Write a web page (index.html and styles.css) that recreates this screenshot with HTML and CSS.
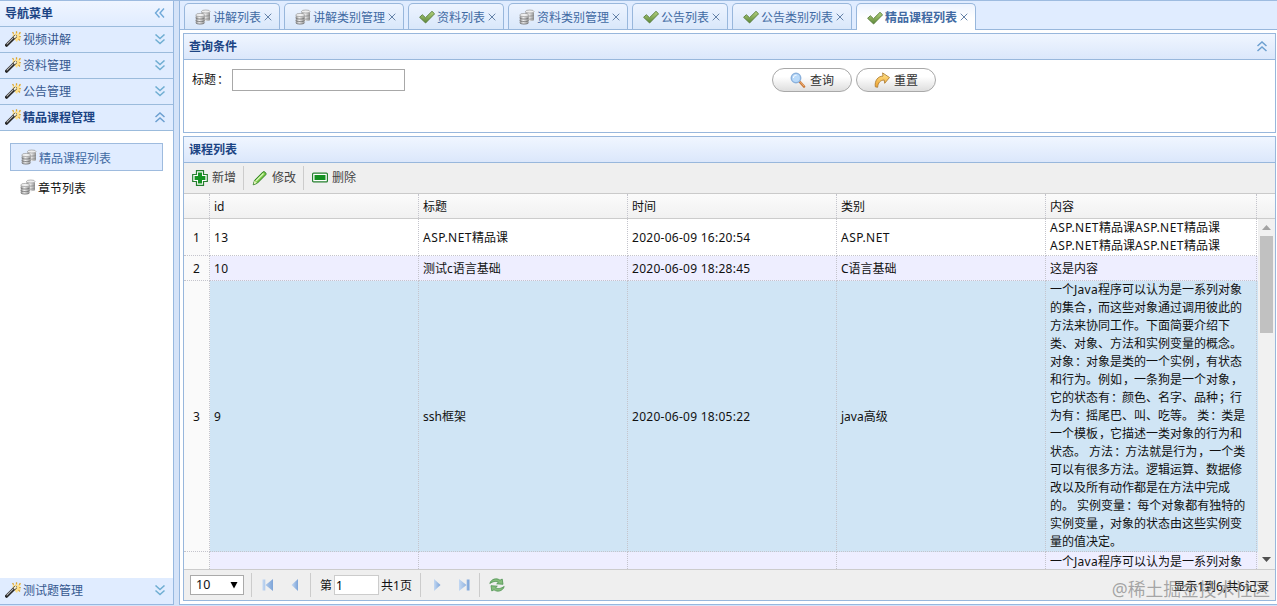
FILE: index.html
```
<!DOCTYPE html>
<html lang="zh-CN">
<head>
<meta charset="utf-8">
<title>精品课程列表</title>
<link rel="stylesheet" href="styles.css">
</head>
<body>
<svg class="defs" width="0" height="0">
  <defs>
    <linearGradient id="steel" x1="0" x2="1" y1="0" y2="0"><stop offset="0" stop-color="#8a8a8a"/><stop offset=".4" stop-color="#f2f2f2"/><stop offset="1" stop-color="#8f8f8f"/></linearGradient>
    <linearGradient id="leaf" x1="0" x2="0" y1="0" y2="1"><stop offset="0" stop-color="#b4d47e"/><stop offset="1" stop-color="#5c8638"/></linearGradient>
    <linearGradient id="sky" x1="0" x2="1" y1="0" y2="0"><stop offset="0" stop-color="#c3d8f2"/><stop offset="1" stop-color="#7da4d8"/></linearGradient>
    <linearGradient id="gold" x1="0" x2="0" y1="0" y2="1"><stop offset="0" stop-color="#ffe68d"/><stop offset="1" stop-color="#ee9f2b"/></linearGradient>
    <symbol id="db" viewBox="0 0 16 16">
      <path d="M6.500 2.500v8.500c0 1.500 8.500 1.500 8.500 0v-8.500z" fill="url(#steel)"/>
      <ellipse cx="10.750" cy="2.500" rx="4.250" ry="1.500" fill="#eee" stroke="#999" stroke-width=".7"/>
      <path d="M6.500 6c1 1.500 7.500 1.500 8.500 0M6.500 9c1 1.500 7.500 1.500 8.500 0" fill="none" stroke="#888" stroke-width=".8"/>
      <path d="M.800 6v7.500c0 2 8.700 2 8.700 0v-7.500z" fill="url(#steel)"/>
      <ellipse cx="5.150" cy="6" rx="4.350" ry="1.600" fill="#f0f0f0" stroke="#999" stroke-width=".7"/>
      <path d="M.800 8.700c0 1.800 8.700 1.800 8.700 0M.800 11.300c0 1.800 8.700 1.800 8.700 0M.800 13.700c0 1.800 8.700 1.800 8.700 0" fill="none" stroke="#777" stroke-width=".9"/>
    </symbol>
    <symbol id="ok" viewBox="0 0 16 16"><path d="M.600 8.300 3.300 5.700l3.200 3L13 2.300l2.600 2.500-9 9.200z" fill="url(#leaf)" stroke="#567a3a" stroke-width=".9"/></symbol>
    <symbol id="wand" viewBox="0 0 16 16">
      <path d="m8 1.500 1.500 2L12 1l.6 2.500L16 2l-1.800 3.500L16 8l-2.800.200L12 11l-2-2-2.500-3z" fill="#ffe08a"/>
      <path d="m7.500 1.200 1.200 1.500M11.500.300v2M15.500 1.300l-1.500 1.500M15.800 5.600h-1.700M15 9.500l-1.500-1.500" stroke="#dda52f" stroke-width="1.300"/>
      <path d="m1.600 14.200 8.800-8.800" stroke="#252525" stroke-width="3.200" stroke-linecap="round"/>
      <path d="m1.700 13.300 6.500-6.500" stroke="#bbb" stroke-width="1.100"/>
      <path d="m9 6.800 2.300-2.300" stroke="#f5f0dd" stroke-width="2"/>
    </symbol>
    <symbol id="down" viewBox="0 0 10 11"><path d="m.500.500 4.500 4 4.500-4M.500 5.500l4.500 4 4.500-4" fill="none" stroke="#6faed2" stroke-width="1.500"/></symbol>
    <symbol id="up" viewBox="0 0 10 11"><path d="m.500 5 4.500-4 4.500 4M.500 10 5 6l4.500 4" fill="none" stroke="#6c9fd0" stroke-width="1.500"/></symbol>
    <symbol id="left" viewBox="0 0 11 12"><path d="M5.500 1.500 1.500 6l4 4.500M10 1.500 6 6l4 4.500" fill="none" stroke="#70a9d9" stroke-width="1.400"/></symbol>
    <symbol id="close" viewBox="0 0 8 8"><path d="m.700.700 6.600 6.600m0-6.600L.700 7.300" fill="none" stroke="#6582a8" stroke-width="1"/></symbol>
    <symbol id="add" viewBox="0 0 16 16"><path d="M4.500.700h7v3.800h3.800v7h-3.800v3.800h-7v-3.800H.700v-7h3.800z" fill="#fff" stroke="#25802f" stroke-width="1.200"/><path d="M6 2.600h4V6h3.400v4H10v3.400H6V10H2.600V6H6z" fill="#159323"/></symbol>
    <symbol id="edit" viewBox="0 0 16 16"><path d="m1.200 14.800 1.400-4.500L10.800 2c1.400-1.300 4.200 1.200 2.900 2.800l-8.500 8.500z" fill="#79c943" stroke="#2b7c23"/><path d="m4 11 7.500-7.500" stroke="#d8f5bd" stroke-width="1.300"/><path d="m2.500 10.600 2.500 2.500-3.500 1.400z" fill="#e2efbb"/></symbol>
    <symbol id="del" viewBox="0 0 16 16"><rect x=".600" y="3.100" width="14.800" height="8.800" rx="1" fill="#fff" stroke="#25802f" stroke-width="1.200"/><rect x="2.500" y="5" width="11" height="5" fill="#139021"/></symbol>
    <symbol id="find" viewBox="0 0 16 16"><path d="m9.500 9.500 4.500 5" stroke="#ca7a3a" stroke-width="2.600" stroke-linecap="round"/><path d="m10 9.500 4 4.500" stroke="#efb077" stroke-width="1"/><circle cx="6" cy="6" r="4.700" fill="#b9dafa" stroke="#8bb1dc" stroke-width="1.500"/><path d="M3.500 6c0-2 1.200-2.800 3-2.800" fill="none" stroke="#fff"/></symbol>
    <symbol id="redo" viewBox="0 0 16 16"><path d="M1.300 14.800C.500 8.500 4 4.200 9 4.100L8.600.900l6.900 4.600-4.800 5.800-.5-3.300C6.500 8.200 4 10.500 3.600 15.300z" fill="url(#gold)" stroke="#b08038" stroke-width=".9"/></symbol>
    <symbol id="first" viewBox="0 0 16 16"><path d="M2.500 2.500h2.800v11H2.500zM13 2v12L5.500 8z" fill="url(#sky)"/></symbol>
    <symbol id="prev" viewBox="0 0 16 16"><path d="M11 2v12L4.500 8z" fill="url(#sky)"/></symbol>
    <symbol id="next" viewBox="0 0 16 16"><path d="M5 2v12l6.500-6z" fill="url(#sky)"/></symbol>
    <symbol id="last" viewBox="0 0 16 16"><path d="M3 2v12l7.500-6zM10.700 2.500h2.800v11h-2.800z" fill="url(#sky)"/></symbol>
    <symbol id="load" viewBox="0 0 16 16"><path id="swirl" d="M.800 6.500C2 2 7.500.500 11 3.200L13.200 2l.8 5.300-6.300-.5L9.400 5.300C7 3.700 4 4.500.800 6.500z" fill="#86bd7d" stroke="#4c9250" stroke-width=".8"/><use href="#swirl" transform="rotate(180 8 8)"/></symbol>
  </defs>
</svg>
<div class="app">
  <aside class="side">
    <div class="bar head"><b>导航菜单</b><svg class="fold l"><use href="#left"/></svg></div>
    <div class="bar"><svg class="ic"><use href="#wand"/></svg><span>视频讲解</span><svg class="fold"><use href="#down"/></svg></div>
    <div class="bar"><svg class="ic"><use href="#wand"/></svg><span>资料管理</span><svg class="fold"><use href="#down"/></svg></div>
    <div class="bar"><svg class="ic"><use href="#wand"/></svg><span>公告管理</span><svg class="fold"><use href="#down"/></svg></div>
    <div class="bar"><svg class="ic"><use href="#wand"/></svg><b>精品课程管理</b><svg class="fold"><use href="#up"/></svg></div>
    <nav class="menu">
      <a class="link on"><svg class="ic"><use href="#db"/></svg>精品课程列表</a>
      <a class="link"><svg class="ic"><use href="#db"/></svg>章节列表</a>
    </nav>
    <div class="bar"><svg class="ic"><use href="#wand"/></svg><span>测试题管理</span><svg class="fold"><use href="#down"/></svg></div>
  </aside>
  <main class="main">
    <div class="tabs">
      <div class="tab"><svg class="ic"><use href="#db"/></svg>讲解列表<svg class="x"><use href="#close"/></svg></div>
      <div class="tab"><svg class="ic"><use href="#db"/></svg>讲解类别管理<svg class="x"><use href="#close"/></svg></div>
      <div class="tab"><svg class="ic"><use href="#ok"/></svg>资料列表<svg class="x"><use href="#close"/></svg></div>
      <div class="tab"><svg class="ic"><use href="#db"/></svg>资料类别管理<svg class="x"><use href="#close"/></svg></div>
      <div class="tab"><svg class="ic"><use href="#ok"/></svg>公告列表<svg class="x"><use href="#close"/></svg></div>
      <div class="tab"><svg class="ic"><use href="#ok"/></svg>公告类别列表<svg class="x"><use href="#close"/></svg></div>
      <div class="tab on"><svg class="ic"><use href="#ok"/></svg>精品课程列表<svg class="x"><use href="#close"/></svg></div>
    </div>
    <section class="panel search">
      <div class="title">查询条件<svg class="fold"><use href="#up"/></svg></div>
      <div class="form">
        <label>标题<i class="p">：</i></label><input class="field">
        <button class="btn"><svg class="ic"><use href="#find"/></svg>查询</button>
        <button class="btn"><svg class="ic"><use href="#redo"/></svg>重置</button>
      </div>
    </section>
    <section class="panel list">
      <div class="title">课程列表</div>
      <div class="tools">
        <span class="tool"><svg class="ic"><use href="#add"/></svg>新增</span>
        <span class="tool"><svg class="ic"><use href="#edit"/></svg>修改</span>
        <span class="tool"><svg class="ic"><use href="#del"/></svg>删除</span>
      </div>
      <div class="row thead"><div class="num"></div><div>id</div><div>标题</div><div>时间</div><div>类别</div><div>内容</div></div>
      <div class="body">
        <div class="rows">
          <div class="row r1"><div class="num">1</div><div class="en">13</div><div><span class="asp">ASP.NET</span>精品课</div><div class="en">2020-06-09 16:20:54</div><div><span class="asp">ASP.NET</span></div><div><span class="asp">ASP.NET</span>精品课<span class="asp">ASP.NET</span>精品课<br><span class="asp">ASP.NET</span>精品课<span class="asp">ASP.NET</span>精品课</div></div>
          <div class="row r2"><div class="num">2</div><div class="en">10</div><div>测试c语言基础</div><div class="en">2020-06-09 18:28:45</div><div>C语言基础</div><div>这是内容</div></div>
          <div class="row r3"><div class="num">3</div><div class="en">9</div><div>ssh框架</div><div class="en">2020-06-09 18:05:22</div><div>java高级</div><div>一个<span class="en">Java</span>程序可以认为是一系列对象<br>的集合<i class="p">，</i>而这些对象通过调用彼此的<br>方法来协同工作。下面简要介绍下<br>类、对象、方法和实例变量的概念。<br>对象<i class="p">：</i>对象是类的一个实例<i class="p">，</i>有状态<br>和行为。例如<i class="p">，</i>一条狗是一个对象<i class="p">，</i><br>它的状态有<i class="p">：</i>颜色、名字、品种<i class="p">；</i>行<br>为有<i class="p">：</i>摇尾巴、叫、吃等。 类<i class="p">：</i>类是<br>一个模板<i class="p">，</i>它描述一类对象的行为和<br>状态。 方法<i class="p">：</i>方法就是行为<i class="p">，</i>一个类<br>可以有很多方法。逻辑运算、数据修<br>改以及所有动作都是在方法中完成<br>的。 实例变量<i class="p">：</i>每个对象都有独特的<br>实例变量<i class="p">，</i>对象的状态由这些实例变<br>量的值决定。</div></div>
          <div class="row r4"><div class="num"></div><div></div><div></div><div></div><div></div><div>一个<span class="en">Java</span>程序可以认为是一系列对象</div></div>
        </div>
        <div class="scroll"><svg class="arr"><path d="M4 11h9l-4.500-5z" fill="#a3a3a3"/></svg><div class="thumb"></div><svg class="arr bottom"><path d="M4 5h9l-4.500 5z" fill="#505050"/></svg></div>
      </div>
      <div class="pager">
        <div class="select">10<svg width="8" height="7"><path d="M.500 0h7L4 6.500z"/></svg></div>
        <span class="sep"></span>
        <svg class="ic"><use href="#first"/></svg><svg class="ic gap"><use href="#prev"/></svg>
        <span class="sep"></span>
        <span class="page">第<input class="pn" value="1">共1页</span>
        <span class="sep"></span>
        <svg class="ic nx"><use href="#next"/></svg><svg class="ic gap"><use href="#last"/></svg>
        <span class="sep"></span>
        <svg class="ic re"><use href="#load"/></svg>
        <span class="info">显示1到6,共6记录</span>
      </div>
    </section>
  </main>
  <div class="mark">@稀土掘金技术社区</div>
</div>
</body>
</html>
```
FILE: styles.css
```
* { box-sizing: border-box; }
body { margin: 0; overflow: hidden; font: 12px/18px "Noto Sans", "Noto Sans CJK SC", sans-serif; color: #111; }
i { font-style: normal; }
svg { display: block; flex: none; }
.defs { position: absolute; }
.ic { width: 16px; height: 16px; }
.p { display: inline-block; width: 12px; height: 18px; vertical-align: top; text-indent: 1px; }
.app { position: relative; display: flex; width: 1277px; height: 606px; background: #d5e3f8; border-top: 1px solid #9dbbe0; }
.side { width: 174px; height: 604px; display: flex; flex-direction: column; background: #fff; border-right: 1px solid #97b8df; border-bottom: 1px solid #97b8df; }
.bar { height: 26px; flex: none; display: flex; align-items: center; padding: 0 8px 0 5px; background: #e0ecff; border-bottom: 1px solid #9bbbdc; color: #35588f; }
.bar:last-child { border-bottom: 0; height: 26px; padding-bottom: 1px; }
.bar b { color: #1c4484; }
.bar .ic { margin: -2px 2px 0 0; }
.head { background: linear-gradient(#eff5ff, #e0ecff); }
.fold { width: 10px; height: 11px; margin-left: auto; }
.fold.l { width: 11px; height: 12px; margin-top: -2px; }
.menu { flex: 1; padding: 12px 10px; }
.link { display: flex; align-items: center; height: 28px; padding: 3px 0 0 11px; border: 1px solid transparent; }
.link .ic { margin: -3px 2px 0 -1px; }
.link.on { width: 153px; background: #e0ecff; border-color: #9ebbde; color: #416aa3; }
.link + .link { margin-top: 2px; padding-left: 10px; }
.main { width: 1098px; height: 604px; margin-left: 5px; background: #fff; border-left: 1px solid #97b8df; border-bottom: 1px solid #97b8df; }
.tabs { display: flex; gap: 4px; height: 29px; padding: 2px 0 0 4px; background: #e0ecff; border-bottom: 1px solid #98b7dc; }
.tab { display: flex; align-items: center; height: 26px; padding: 2px 6px 0 10px; border: 1px solid #98b7dc; border-bottom: 0; border-radius: 5px 5px 0 0; background: linear-gradient(#edf4ff, #d9e7fa); color: #416aa3; }
.tab .ic { margin: -1px 2px 0 0; }
.tab.on { height: 27px; background: linear-gradient(#edf4ff, #fff 55%); font-weight: bold; }
.x { width: 8px; height: 8px; margin: -2px 0 0 3px; }
.tab { padding-right: 7px; }
.panel { width: 1093px; margin: 3px 0 0 3px; border: 1px solid #98b7dc; }
.search { height: 100px; }
.list { height: 465px; }
.title { display: flex; align-items: center; height: 26px; padding: 0 8px 0 5px; background: linear-gradient(#f0f6ff, #dbe7fb); border-bottom: 1px solid #98b7dc; color: #1c4484; font-weight: bold; }
.form { display: flex; align-items: flex-start; padding: 8px 8px; }
.form label { width: 40px; padding-top: 3px; }
.field { width: 173px; height: 22px; margin: 1px 367px 0 0; padding: 0; border: 1px solid #a8a8a8; background: #fff; }
.btn { display: flex; align-items: center; justify-content: center; gap: 4px; width: 80px; height: 24px; margin-right: 4px; padding: 2px 1px 0 1px; border: 1px solid #a8a8a8; border-radius: 12px; background: linear-gradient(#fff 35%, #dedede); font: inherit; color: #333; }
.btn .ic { margin-top: -2px; }
.tools { display: flex; align-items: center; height: 31px; background: #efefef; border-bottom: 1px solid #cacaca; color: #444; }
.tool { display: flex; align-items: center; gap: 4px; height: 24px; width: 60px; padding-left: 8px; border-right: 1px solid #ccc; }
.tool .ic { margin-top: -1px; }
.tool:last-child { border: 0; }
.row { display: grid; grid-template-columns: 26px 209px 209px 209px 209px 211px; white-space: nowrap; }
.row > div { display: flex; align-items: center; padding: 2px 0 0 4px; border-right: 1px dotted #c4c4cc; border-bottom: 1px dotted #c4c4cc; }
.row > div:last-child { display: block; align-content: center; }
.row > .num { padding: 2px 0 0; justify-content: center; background: #fafafa; }
.en { letter-spacing: .27px; }
.asp { letter-spacing: .48px; }
.thead { height: 25px; background: linear-gradient(#fbfbfb, #f1f1f1); border-bottom: 1px solid #ccc; }
.thead > div { border-bottom: 0; }
.thead > .num { background: none; }
.body { display: flex; height: 350px; overflow: hidden; }
.rows { width: 1074px; height: 350px; flex: none; }
.r1 { height: 37px; grid-template-rows: 37px; }
.r2 { height: 25px; background: #eeeeff; }
.r3 { height: 271px; grid-template-rows: 271px; background: #d0e5f5; }
.row.r1 > div:last-child { padding-top: 0; line-height: 18px; }
.row.r3 > div:last-child { padding-top: 0; align-content: start; }
.r4 { height: 17px; grid-template-rows: 17px; background: #eeeeff; }
.row.r4 > div { padding-top: 0; border-bottom: 0; line-height: 20px; }
.row.r4 > div:last-child { align-content: start; }
.scroll { width: 17px; background: #f1f1f1; display: flex; flex-direction: column; }
.arr { width: 17px; height: 17px; }
.arr.bottom { margin-top: auto; }
.thumb { width: 13px; height: 97px; margin-left: 2px; background: #c1c1c1; }
.pager { display: flex; align-items: center; height: 31px; padding: 0 6px; background: #efefef; border-top: 1px solid #ccc; }
.select { display: flex; align-items: center; justify-content: space-between; width: 54px; height: 20px; padding: 0 5px 0 5px; border: 1px solid #aaa; background: #fff; font-size: 12.500px; }
.sep { width: 1px; height: 24px; margin: 0 8px 0 7px; background: #ccc; }
.gap { margin-left: 11px; }
.page { display: flex; align-items: center; width: 94px; padding: 1px 0 0 1px; }
.pn { width: 45px; height: 20px; margin: -1px 2px 0; padding: 0 1px; border: 1px solid #ccc; background: #fff; font: inherit; }
.re { margin-left: 1px; }
.info { margin-left: auto; padding-top: 3px; }
.mark { position: absolute; right: 7px; bottom: 5px; font: 17.800px/24px "Noto Sans", "Noto Sans CJK SC", sans-serif; color: rgba(100, 100, 100, .55); white-space: nowrap; }
```
